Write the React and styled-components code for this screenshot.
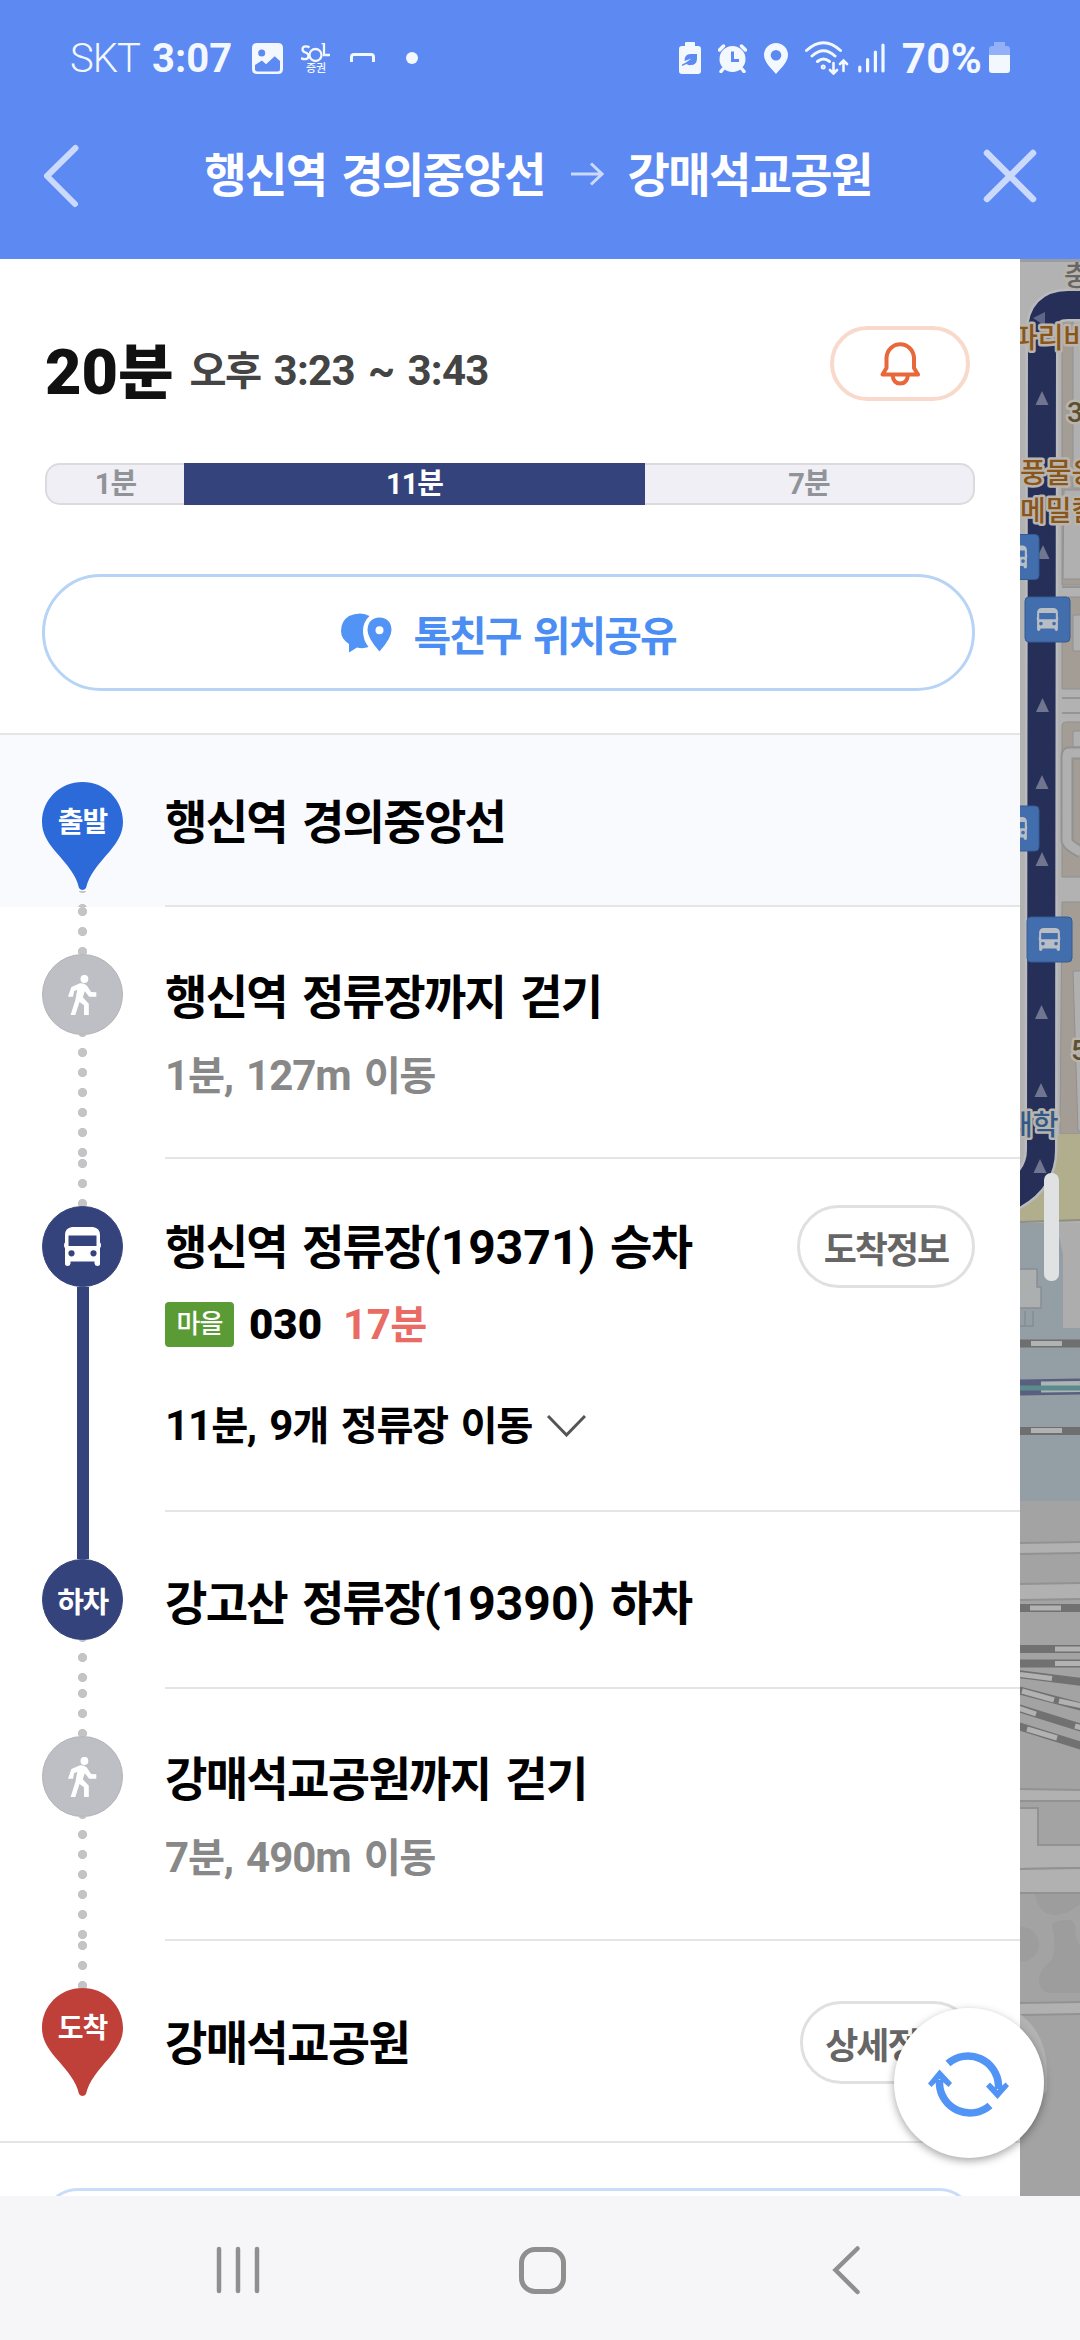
import React from 'react';
import styled, { createGlobalStyle, css } from 'styled-components';

const NAVY = '#34437c';

const route = [
    { id: 'start', marker: 'start', title: '행신역 경의중앙선', height: 172, textTop: 86, from: 'none', to: 'dots', tinted: true },
    { id: 'walk1', marker: 'walk', title: '행신역 정류장까지 걷기', sub: '1분, 127m 이동', height: 252, textTop: 89, from: 'dots', to: 'dots' },
    { id: 'bus', marker: 'bus', title: '행신역 정류장(19371) 승차', button: '도착정보', buttonTop: 46, buttonWidth: 178, height: 353, textTop: 87, from: 'dots', to: 'solid' },
    { id: 'off', marker: 'off', title: '강고산 정류장(19390) 하차', height: 177, textTop: 90, from: 'solid', to: 'dots' },
    { id: 'walk2', marker: 'walk', title: '강매석교공원까지 걷기', sub: '7분, 490m 이동', height: 252, textTop: 89, from: 'dots', to: 'dots' },
    { id: 'end', marker: 'end', title: '강매석교공원', button: '상세정보', buttonTop: 60, buttonWidth: 175, height: 202, textTop: 101, from: 'dots', to: 'none', last: true },
];

// hangul runs are set smaller and tighter than the digits beside them
function Mixed({ children }) {
    return children.split(/([0-9(),:~%m]+)/).filter(Boolean).map((run, i) => (
        /^[0-9(),:~%m]/.test(run) ? <span key={i}>{run}</span> : <Hangul key={i}>{run}</Hangul>
    ));
}

function BusGlyph(props) {
    return (
        <svg viewBox="0 0 37 39" {...props}>
            <path
                fillRule="evenodd"
                fill="currentColor"
                d="M8 0H29Q36 1 36 8V15.500Q37 16 37 18Q37 20.500 36 21V36.500Q36 39 33.500 39Q31 39 30.500 36.500V34.500H6.500V36.500Q6 39 3.500 39Q1 39 1 36.500V21Q0 20.500 0 18Q0 16 1 15.500V8Q1 1 8 0ZM4.500 8.500V19H32.500V8.500ZM7.500 23.200A3.100 3.100 0 1 0 7.500 29.400A3.100 3.100 0 1 0 7.500 23.200ZM29.500 23.200A3.100 3.100 0 1 0 29.500 29.400A3.100 3.100 0 1 0 29.500 23.200Z"
            />
        </svg>
    );
}

function WalkGlyph() {
    return (
        <svg width="29" height="40" viewBox="0 0 29 40" fill="#fff">
            <ellipse cx="16.400" cy="3.900" rx="3.900" ry="4" />
            <path d="M0 21.700H5L6.100 16.300L9.300 14.700L7.300 25.300L2.600 40H7.300L11.500 27L16 30.300V40H20.800V28.700L14.800 22.300L16.800 16.300L21.200 21.700H28.300V17.300L23.100 17L18.800 10.600Q16 8 12 8.300L3.400 12Z" />
        </svg>
    );
}

function Marker({ kind }) {
    if (kind === 'start' || kind === 'end') {
        return (
            <Pin>
                <svg width="81" height="108" viewBox="0 0 81 108" fill={kind === 'start' ? '#2c69d9' : '#bf3f39'}>
                    <path d="M40.500 0C63 0 81 17.500 81 40C81 51 75.500 60 68 69C55 84 47 93 44 106Q42.500 108 40.500 108Q38.500 108 37 106C34 93 26 84 13 69C5.500 60 0 51 0 40C0 17.500 18 0 40.500 0Z" />
                </svg>
                <PinLabel>{kind === 'start' ? '출발' : '도착'}</PinLabel>
            </Pin>
        );
    }
    return (
        <Disc $walk={kind === 'walk'}>
            {kind === 'walk' && <WalkGlyph />}
            {kind === 'bus' && <BusGlyph width="37" height="39" />}
            {kind === 'off' && <DiscLabel>하차</DiscLabel>}
        </Disc>
    );
}

function StatusBar() {
    return (
        <Status>
            <StatusGroup>
                <Carrier>SKT</Carrier>
                <Clock>3:07</Clock>
                <svg width="31" height="31" viewBox="0 0 31 31">
                    <path fill="#f3f8ff" fillRule="evenodd" d="M5 0H26Q31 0 31 5V26Q31 31 26 31H5Q0 31 0 26V5Q0 0 5 0ZM9.700 6.500A3.500 3.500 0 1 0 9.700 13.500A3.500 3.500 0 1 0 9.700 6.500ZM3 22V26Q3 28.500 5.500 28.500H25.500Q28 28.500 28 26V18L22.700 13.200L14 21.200L10 17.500Z" />
                </svg>
                <Sol>
                    <svg width="30" height="20" viewBox="0 0 30 20" fill="none" stroke="#f3f8ff" strokeWidth="2.300">
                        <path d="M8.500 4.500Q7 3.300 4.700 3.300Q1.500 3.300 1.500 6.200Q1.500 8.500 4.500 9.500Q7.500 10.500 7.500 13Q7.500 16.200 4 16.200Q1.500 16.200 0 15" />
                        <circle cx="14.500" cy="12" r="6" />
                        <path d="M20.500 0H23V12H29" />
                    </svg>
                    <span>증권</span>
                </Sol>
                <svg width="26" height="10" viewBox="0 0 26 10" fill="none" stroke="#f3f8ff" strokeWidth="3">
                    <path d="M1.500 9V4Q1.500 1.500 4 1.500H21Q23.500 1.500 23.500 4V9" />
                </svg>
                <Dot />
            </StatusGroup>
            <StatusGroup $end>
                <svg width="22" height="32" viewBox="0 0 22 32">
                    <path fill="#f3f8ff" d="M6 1Q6 0 7 0H15Q16 0 16 1V4H19Q22 4 22 7V29Q22 32 19 32H3Q0 32 0 29V7Q0 4 3 4H6Z" />
                    <path fill="#5d89f3" d="M18 12V17Q17.500 23 12 23Q9 23.500 7.500 22L3 24V22.500L7 20.500L12.500 16.500L5.500 19Q5.500 12 11.500 12Z" />
                </svg>
                <svg width="29" height="30" viewBox="0 0 29 30">
                    <circle cx="14.500" cy="16" r="13" fill="#f3f8ff" />
                    <path d="M1.500 7L5.500 3M27.500 7L23.500 3M5 26L3 28.500M24 26L26 28.500" stroke="#f3f8ff" strokeWidth="3.500" strokeLinecap="round" />
                    <path d="M14.500 8.500V17.500H21" fill="none" stroke="#5d89f3" strokeWidth="3" />
                </svg>
                <svg width="24" height="31" viewBox="0 0 24 31">
                    <path fill="#f3f8ff" fillRule="evenodd" d="M12 0A12 12 0 0 1 24 12C24 19 17 25 12 31C7 25 0 19 0 12A12 12 0 0 1 12 0ZM12 7A5.300 5.300 0 1 0 12 17.600A5.300 5.300 0 1 0 12 7Z" />
                </svg>
                <svg width="44" height="34" viewBox="0 0 44 34" fill="none" stroke="#f3f8ff" strokeWidth="3" strokeLinecap="round">
                    <path d="M1.500 9.500Q18.500 -6 35.500 9.500M7 15Q18.500 4.500 30 15M12.500 20.500Q18.500 15.500 24.500 20.500" />
                    <circle cx="18.200" cy="26" r="1" />
                    <path strokeWidth="2.600" d="M28.500 22V32M25 29L28.500 32.500L32 29M38.500 30V20M35 23L38.500 19.500L42 23" />
                </svg>
                <svg width="27" height="30" viewBox="0 0 27 30" stroke="#f3f8ff" strokeWidth="3.200" strokeLinecap="round">
                    <path d="M1.800 24V28M9.600 16.500V28M17.400 9V28M25 2V28" />
                </svg>
                <Percent>70%</Percent>
                <svg width="21" height="32" viewBox="0 0 21 32">
                    <path fill="#92b0f8" d="M5 0H16V4H18Q21 4 21 7V13H0V7Q0 4 3 4H5Z" />
                    <path fill="#f3f8ff" d="M0 13H21V28Q21 31 18 31H3Q0 31 0 28Z" />
                </svg>
            </StatusGroup>
        </Status>
    );
}

const arrows = [[1042, 398], [1043, 552], [1042.500, 705], [1042, 782], [1042, 859], [1041.500, 1012], [1041, 1090], [1040, 1166]];
const stops = [[994, 534.500], [1025, 597], [994, 806], [1027, 917]];

function MapStrip() {
    return (
        <MapSvg viewBox="1020 259 60 1937">
            <rect x="1020" y="259" width="60" height="1937" fill="#b2b2b3" />
            <g fill="#a39d95" stroke="#929090" strokeWidth="1">
                <path d="M1062 320H1081V585H1062ZM1062 597H1081V689H1062ZM1062 726Q1062 722 1066 722H1081V877H1062ZM1062 902H1081V1134H1060Z" />
                <path fill="#b0b0b0" d="M1073 318H1081V488H1073ZM1064 490H1081V579H1063ZM1073 615H1081V651H1073ZM1073 731H1081V747H1073Z" />
                <path fill="#b0b0b0" d="M1073 971H1081V1131H1078Z" />
            </g>
            <path d="M1062 698H1081M1062 713H1081M1062 587H1081" stroke="#959595" strokeWidth="2" />
            <path d="M1081 753H1069Q1067 753 1067 757V840Q1067 845 1081 852" fill="none" stroke="#929292" strokeWidth="13" />
            <path d="M1081 753H1069Q1067 753 1067 757V840Q1067 845 1081 852" fill="none" stroke="#b0b0b0" strokeWidth="9" />
            <path d="M1020 1222V1190L1060 1134H1081V1221Z" fill="#b1ae8e" />
            <path d="M1020 1222L1081 1220" stroke="#8f8f83" strokeWidth="2" />
            <rect x="1020" y="1223" width="60" height="278" fill="#949fa5" />
            <path d="M1056 1223H1081V1328H1063V1254Z" fill="#adadad" />
            <path d="M1020 1269H1037V1287H1041V1308H1020" fill="#acafb0" stroke="#898f92" strokeWidth="1.500" />
            <path d="M1025 1311V1326H1020M1025 1326H1033V1311" fill="none" stroke="#868d91" strokeWidth="1.500" />
            <path d="M1020 1343.500H1081M1020 1431H1081" stroke="#6f6f6f" strokeWidth="8" />
            <path d="M1031 1343.500H1062M1031 1430.500H1062" stroke="#b1b3b3" strokeWidth="5" />
            <path d="M1020 1387.500L1080 1386.500" stroke="#5a5f80" strokeWidth="16" />
            <path d="M1041 1387L1080 1386.500" stroke="#adb4b6" strokeWidth="11" />
            <path d="M1020 1388H1081" stroke="#5b8b8c" strokeWidth="5" />
            <rect x="1020" y="1501" width="60" height="695" fill="#a3a3a3" />
            <g fill="#b1b1b1" stroke="#929292" strokeWidth="2">
                <path d="M1018 1543L1082 1542V1553L1018 1554ZM1018 1584L1082 1583V1599L1018 1600ZM1018 1789L1082 1790V1801H1018Z" />
                <path d="M1018 1808H1038V1845H1082V1868L1018 1869Z" />
                <path d="M1018 1869L1082 1868V1893H1018ZM1018 2003L1082 2002V2014L1018 2015Z" />
            </g>
            <g fill="none" stroke="#717171" strokeWidth="8">
                <path d="M1020 1608H1081M1020 1649H1081M1020 1663.500H1081M1018 1674L1082 1682M1018 1690L1082 1707M1018 1708L1082 1728M1018 1726L1082 1746" />
            </g>
            <g fill="none" stroke="#b2b2b2" strokeWidth="5">
                <path d="M1030 1608H1061M1055 1649H1081M1055 1663.500H1081M1020 1674.500L1052 1678.500M1022 1691L1054 1700M1059 1701L1082 1706M1018 1708L1036 1714M1027 1729L1057 1738M1075 1726L1082 1728" />
            </g>
            <g fill="#9d9d9d">
                <path d="M1035 1894H1081V1903Q1070 1914 1055 1915Q1038 1914 1035 1894ZM1020 1926Q1038 1929 1039 1944Q1038 1960 1020 1962ZM1052 1925Q1054 1920 1070 1920Q1076 1920 1076 1938L1081 1948V1993H1050Q1039 1992 1039 1978Q1041 1968 1052 1960Q1057 1945 1052 1925Z" />
            </g>
            <path d="M1020 2014Q1047 2034 1047 2072V2090L1020 2130Z" fill="#b3b3b3" />
            <path d="M1080 305H1068Q1042 305 1042 332L1041 1150Q1041 1180 1010 1196" fill="none" stroke="#bbbbbe" strokeWidth="33" />
            <path d="M1080 305H1068Q1042 305 1042 332L1041 1150Q1041 1180 1010 1196" fill="none" stroke="#252f58" strokeWidth="28" />
            <path d="M1033 318L1045 312V326Z" fill="#5f6689" />
            {arrows.map(([x, y]) => (
                <path key={y} d={`M${x} ${y - 7}L${x + 6.500} ${y + 7}H${x - 6.500}Z`} fill="#70768f" />
            ))}
            {stops.map(([x, y]) => (
                <g key={y}>
                    <rect x={x} y={y} width="45" height="45" rx="4" fill="#426eae" stroke="#345b94" />
                    <BusGlyph x={x + 11.500} y={y + 10.500} width="22" height="24" color="#b9bec4" />
                </g>
            ))}
            <MapText x="1064" y="286" fill="#666">충</MapText>
            <MapText x="1012" y="348" fill="#8a5519">파리바</MapText>
            <MapText x="1067" y="422" fill="#5c5030">3</MapText>
            <MapText x="1020" y="483" fill="#8a5519">풍물옹</MapText>
            <MapText x="1020" y="521" fill="#8a5519">메밀칼</MapText>
            <MapText x="1071" y="1060" fill="#5c5030">5</MapText>
            <MapText x="1007" y="1135" fill="#315a89">대학</MapText>
            <rect x="1020" y="259" width="60" height="3" fill="#999ca6" />
        </MapSvg>
    );
}

function Step({ step }) {
    return (
        <StepRow $height={step.height} $tinted={step.tinted}>
            <Rail>
                <Connector $kind={step.from} $top />
                <Marker kind={step.marker} />
                <Connector $kind={step.to} />
            </Rail>
            <StepBody $last={step.last} $top={step.textTop - 33}>
                <StepTitle><Mixed>{step.title}</Mixed></StepTitle>
                {step.sub && <StepSub><Mixed>{step.sub}</Mixed></StepSub>}
                {step.marker === 'bus' && (
                    <>
                        <BusLine>
                            <BusTag>마을</BusTag>
                            <strong>030</strong>
                            <Arrival><Mixed>17분</Mixed></Arrival>
                        </BusLine>
                        <StopCount>
                            <span><Mixed>11분, 9개 정류장 이동</Mixed></span>
                            <svg width="39" height="22" viewBox="0 0 39 22" fill="none" stroke="#555" strokeWidth="3">
                                <path d="M1 1L19.500 20L38 1" />
                            </svg>
                        </StopCount>
                    </>
                )}
            </StepBody>
            {step.button && (
                <ButtonCell $last={step.last} $top={step.buttonTop}>
                    <SmallButton $width={step.buttonWidth}>{step.button}</SmallButton>
                </ButtonCell>
            )}
        </StepRow>
    );
}

export default function App() {
    return (
        <Screen>
            <Global />
            <StatusBar />
            <TitleBar>
                <svg width="38" height="64" viewBox="0 0 38 64" fill="none" stroke="#cbdafc" strokeWidth="6" strokeLinecap="round" strokeLinejoin="round">
                    <path d="M32.500 4L4 32L32 60" />
                </svg>
                <Heading>
                    <span><Mixed>행신역 경의중앙선</Mixed></span>
                    <svg width="33" height="24" viewBox="0 0 33 24" fill="none" stroke="#cbdafc" strokeWidth="3">
                        <path d="M0 12H31M20 1.500L31 12L20 22.500" />
                    </svg>
                    <span><Mixed>강매석교공원</Mixed></span>
                </Heading>
                <svg width="54" height="54" viewBox="0 0 54 54" stroke="#cbdafc" strokeWidth="6.500" strokeLinecap="round">
                    <path d="M4 4L50 50M50 4L4 50" />
                </svg>
            </TitleBar>
            <Content>
                <Panel>
                    <Summary>
                        <Total><Mixed>20분</Mixed></Total>
                        <Period><Mixed>오후 3:23 ~ 3:43</Mixed></Period>
                        <AlarmButton>
                            <svg width="40" height="45" viewBox="0 0 40 45" fill="none" stroke="#e8683a" strokeWidth="4" strokeLinejoin="round">
                                <path d="M6.500 27V16.500A13.800 14.500 0 0 1 34 16.500V27L38 33.500H2.500Z" />
                                <path d="M12.500 34Q13.500 42.500 20.200 42.500Q27 42.500 28 34" />
                            </svg>
                        </AlarmButton>
                    </Summary>
                    <TimeBar>
                        <Segment $width={139}>1분</Segment>
                        <Segment $width={461} $ride>11분</Segment>
                        <Segment $width={330}>7분</Segment>
                    </TimeBar>
                    <ShareButton>
                        <svg width="51" height="40" viewBox="0 0 51 40">
                            <path fill="#5294f6" d="M19 0.500Q24.500 0.500 28.500 3Q22 9 22 18Q22 27 27.500 34Q22 36 16 34.500L8 39.500V31Q0 26 0 18Q0 8 8 3Q13 0.500 19 0.500Z" />
                            <path fill="#5294f6" fillRule="evenodd" d="M38.500 4.500Q50 5 50.500 17Q50.500 25 38.500 38.500Q26.500 25 26.500 17Q27 5 38.500 4.500ZM38.500 13.200A4 4 0 1 0 38.500 21.200A4 4 0 1 0 38.500 13.200Z" />
                        </svg>
                        <span>톡친구 위치공유</span>
                    </ShareButton>
                    <Steps>
                        {route.map((step) => <Step key={step.id} step={step} />)}
                    </Steps>
                    <NextButton />
                </Panel>
                <MapStrip />
                <ScrollHandle />
                <RefreshButton>
                    <svg width="82" height="70" viewBox="0 0 82 70" fill="none" stroke="#5294f6" strokeWidth="7.500">
                        <path d="M20 13.500A30.500 30.500 0 0 1 70.500 35V39" />
                        <path d="M62 55.500A30.500 30.500 0 0 1 11.500 34V30" />
                        <path fill="#5294f6" stroke="none" d="M11.500 19.500L24 33L20.500 37L11.500 29L3.500 37L0 33.500ZM69.500 49L58 36.500L62 32.500L69.500 40L77.500 32.500L81 36Z" />
                    </svg>
                </RefreshButton>
            </Content>
            <NavBar>
                <svg width="45" height="48" viewBox="0 0 45 48" stroke="#8f8f8f" strokeWidth="4.500" strokeLinecap="round">
                    <path d="M3 3V45M22 3V45M41 3V45" />
                </svg>
                <HomeKey />
                <svg width="45" height="50" viewBox="0 0 45 50" fill="none" stroke="#8f8f8f" strokeWidth="4.500" strokeLinecap="round">
                    <path d="M34.500 3.500L12.500 25L34.500 47" />
                </svg>
            </NavBar>
        </Screen>
    );
}

const Global = createGlobalStyle`
    * {
        box-sizing: border-box;
    }
    body {
        margin: 0;
        font-family: Roboto, "Noto Sans CJK KR", sans-serif;
        font-weight: 700;
        white-space: pre;
    }
    svg {
        display: block;
        flex: none;
    }
`

const Screen = styled.div`
    width: 1080px;
    height: 2340px;
    overflow: hidden;
    display: flex;
    flex-direction: column;
    background: #fff;
`

const Hangul = styled.span`
    font-size: 0.96em;
    letter-spacing: -0.037em;
    word-spacing: 0.11em;
`

const Status = styled.div`
    height: 114px;
    background: #5d89f3;
    color: #f3f8ff;
    font-size: 40px;
    display: flex;
    justify-content: space-between;
    padding: 2px 70px 0 70px;
`

const StatusGroup = styled.div`
    display: flex;
    align-items: center;
    gap: ${props => props.$end ? '0' : '18px'};
    ${props => props.$end && css`
        & > * + * {
            margin-left: 17px;
        }
        & > *:nth-child(5) {
            margin-left: 9px;
        }
        & > *:last-child {
            margin-left: 7px;
        }
    `}
`

const Carrier = styled.span`
    width: 75px;
    margin-right: -11px;
    font-weight: 300;
    letter-spacing: -1px;
`

const Clock = styled.span`
    width: 82px;
`

const Sol = styled.div`
    width: 30px;
    margin-right: 1px;
    display: flex;
    flex-direction: column;
    align-items: center;
    span {
        font-size: 11px;
        line-height: 11px;
        font-weight: 500;
    }
`

const Dot = styled.i`
    width: 12px;
    height: 12px;
    border-radius: 50%;
    background: #f3f8ff;
    margin-left: 12px;
`

const Percent = styled.span`
    font-size: 42px;
    letter-spacing: 0.3px;
`

const TitleBar = styled.header`
    height: 145px;
    background: #5d89f3;
    color: #fff;
    display: flex;
    align-items: center;
    justify-content: space-between;
    padding: 0 43px 21px 43px;
`

const Heading = styled.h1`
    margin: 0;
    padding: 0 0 8px 12px;
    display: flex;
    align-items: center;
    font-size: 48px;
    font-weight: 700;
    svg {
        margin: 4px 24px 0 26px;
    }
`

const Content = styled.main`
    height: 1937px;
    display: flex;
    position: relative;
    overflow: hidden;
`

const Panel = styled.section`
    width: 1020px;
    flex: none;
    display: flex;
    flex-direction: column;
`

const Summary = styled.div`
    height: 204px;
    flex: none;
    padding: 12px 50px 0 45px;
    display: flex;
    align-items: center;
`

const Total = styled.strong`
    font-size: 63px;
    color: #111;
    font-weight: 900;
`

const Period = styled.span`
    margin-left: 18px;
    font-size: 42px;
    letter-spacing: -0.7px;
    color: #444;
`

const AlarmButton = styled.div`
    margin: -8px 0 0 auto;
    width: 140px;
    height: 75px;
    border: 4px solid #f8d9cc;
    border-radius: 38px;
    display: flex;
    align-items: center;
    justify-content: center;
`

const TimeBar = styled.div`
    margin: 0 45px;
    height: 42px;
    flex: none;
    display: flex;
`

const Segment = styled.div`
    width: ${props => props.$width}px;
    display: flex;
    align-items: center;
    justify-content: center;
    font-size: 29px;
    line-height: 38px;
    letter-spacing: -1px;
    color: ${props => props.$ride ? '#fff' : '#909499'};
    background: ${props => props.$ride ? NAVY : '#f0eff6'};
    border: ${props => props.$ride ? '0' : '2px solid #dbdbdf'};
    &:first-child {
        border-right: 0;
        border-radius: 15px 0 0 15px;
    }
    &:last-child {
        border-left: 0;
        border-radius: 0 15px 15px 0;
    }
`

const ShareButton = styled.div`
    margin: 69px 45px 42px 42px;
    height: 117px;
    flex: none;
    border: 3px solid #b7d3f6;
    border-radius: 59px;
    display: flex;
    align-items: center;
    justify-content: center;
    gap: 21px;
    color: #4a8ef4;
    font-size: 41px;
    letter-spacing: -2px;
    word-spacing: 4px;
`

const Steps = styled.div`
    flex: none;
    border-top: 2px solid #e4e5e7;
    border-bottom: 2px solid #e4e4e4;
`

const StepRow = styled.div`
    height: ${props => props.$height}px;
    display: flex;
    background: ${props => props.$tinted ? '#f8fafd' : '#fff'};
    &:last-child {
        height: 200px;
    }
`

const Rail = styled.div`
    width: 165px;
    flex: none;
    padding-left: 42px;
    display: flex;
    flex-direction: column;
`

const Connector = styled.div`
    width: 81px;
    ${props => props.$top ? 'height: 47px;' : 'flex: 1;'}
    ${props => props.$kind === 'dots' && css`
        background: radial-gradient(circle at 40.5px 4.5px, #c4c4c6 4.2px, transparent 5px);
        background-size: 81px 20px;
        background-position: 0 ${props.$top ? 0 : -7}px;
    `}
    ${props => props.$kind === 'solid' && css`
        background: linear-gradient(${NAVY}, ${NAVY}) 35px 0 / 12px 100% no-repeat;
    `}
`

const Disc = styled.div`
    width: 81px;
    height: 81px;
    flex: none;
    border-radius: 50%;
    display: flex;
    align-items: center;
    justify-content: center;
    color: #fff;
    background: ${props => props.$walk ? '#bdbfc4' : NAVY};
    border: 1px solid ${props => props.$walk ? '#b2b3b7' : NAVY};
`

const DiscLabel = styled.span`
    font-size: 29px;
    letter-spacing: -1.5px;
`

const Pin = styled.div`
    width: 81px;
    height: 109px;
    flex: none;
    display: grid;
    & > * {
        grid-area: 1 / 1;
    }
`

const PinLabel = styled.span`
    color: #fff;
    font-size: 28px;
    letter-spacing: -1px;
    line-height: 81px;
    text-align: center;
`

const StepBody = styled.div`
    flex: 1;
    padding-top: ${props => props.$top}px;
    border-bottom: ${props => props.$last ? '0' : '2px solid #e5e5e5'};
`

const StepTitle = styled.h2`
    margin: 0;
    font-size: 48px;
    line-height: 70px;
    height: 70px;
    font-weight: 700;
    color: #000;
`

const StepSub = styled.p`
    margin: 13px 0 0;
    font-size: 42px;
    line-height: 60px;
    letter-spacing: -1px;
    color: #888;
`

const BusLine = styled.div`
    margin-top: 19px;
    height: 45px;
    display: flex;
    align-items: center;
    font-size: 42px;
    line-height: 45px;
    strong {
        margin-left: 15px;
    }
`

const BusTag = styled.span`
    width: 69px;
    height: 45px;
    line-height: 44px;
    border-radius: 4px;
    background: #5b9b36;
    color: #fff;
    font-size: 26px;
    font-weight: 500;
    letter-spacing: -1px;
    text-align: center;
`

const Arrival = styled.span`
    margin-left: 21px;
    letter-spacing: -0.5px;
    color: #ea6a64;
`

const StopCount = styled.div`
    margin-top: 49px;
    height: 60px;
    display: flex;
    align-items: center;
    font-size: 42px;
    line-height: 60px;
    letter-spacing: -1px;
    svg {
        margin-left: 15px;
    }
`

const ButtonCell = styled.div`
    padding: ${props => props.$top}px 45px 0 0;
    border-bottom: ${props => props.$last ? '0' : '2px solid #e5e5e5'};
`

const SmallButton = styled.div`
    width: ${props => props.$width}px;
    height: 83px;
    border: 3px solid #e0e0e0;
    border-radius: 42px;
    display: flex;
    align-items: center;
    justify-content: center;
    color: #666;
    font-size: 36px;
    letter-spacing: -2px;
`

const NextButton = styled.div`
    margin: 45px 45px 0 42px;
    height: 117px;
    flex: none;
    border: 3px solid #c9ddf8;
    border-radius: 36px;
`

const MapSvg = styled.svg`
    width: 60px;
    height: 1937px;
`

const MapText = styled.text`
    font-family: Roboto, "Noto Sans CJK KR", sans-serif;
    font-size: 28px;
    font-weight: 500;
    stroke: #b9b4ae;
    stroke-width: 5px;
    stroke-linejoin: round;
    paint-order: stroke;
`

const ScrollHandle = styled.div`
    position: absolute;
    left: 1044px;
    top: 914px;
    width: 15px;
    height: 108px;
    border-radius: 7px;
    background: #dfe1e3;
`

const RefreshButton = styled.div`
    position: absolute;
    left: 894px;
    top: 1749px;
    width: 150px;
    height: 150px;
    border-radius: 50%;
    background: #fff;
    box-shadow: 0 3px 8px rgba(0, 0, 0, 0.35);
    display: flex;
    align-items: center;
    justify-content: center;
    padding-top: 3px;
`

const NavBar = styled.nav`
    height: 144px;
    background: #f6f6f9;
    display: flex;
    align-items: center;
    justify-content: space-between;
    padding: 4px 212px 0 216px;
`

const HomeKey = styled.div`
    width: 47px;
    height: 47px;
    border: 5px solid #8f8f8f;
    border-radius: 16px;
`
